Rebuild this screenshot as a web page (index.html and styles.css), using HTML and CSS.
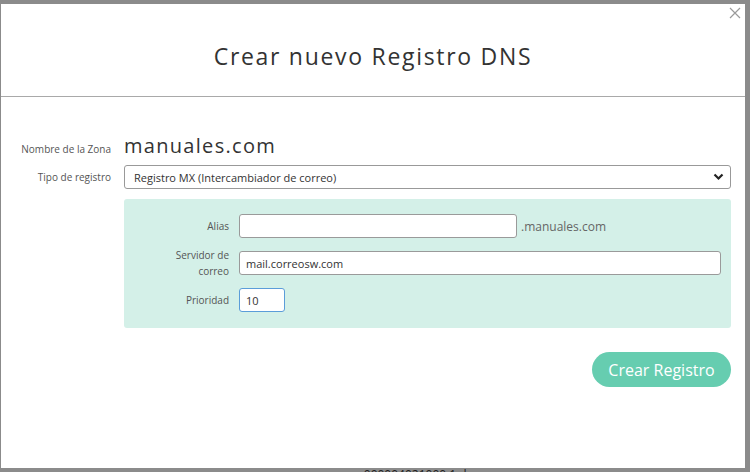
FILE: index.html
```html
<!DOCTYPE html>
<html lang="es">
<head>
    <meta charset="UTF-8">
    <meta name="viewport" content="width=device-width, initial-scale=1.0">
    <title>Crear nuevo Registro DNS</title>
    <link rel="stylesheet" href="styles.css">
</head>
<body>
    <div class="modal">
        <div class="modal-header">
            <h2>Crear nuevo Registro DNS</h2>
            <button class="close-btn" aria-label="Cerrar">
                <svg width="12" height="12" viewBox="0 0 12 12">
                    <path d="M1 1 L11 11 M11 1 L1 11" stroke="#9a9a9a" stroke-width="1.2" fill="none"/>
                </svg>
            </button>
        </div>

        <div class="modal-body">
            <div class="row row-zone">
                <label class="label">Nombre de la Zona</label>
                <div class="zone-name">manuales.com</div>
            </div>
            <div class="row row-type">
                <label class="label">Tipo de registro</label>
                <div class="select">
                    <span>Registro MX (Intercambiador de correo)</span>
                    <svg width="11" height="8" viewBox="0 0 11 8">
                        <path d="M1.5 1.5 L5.5 5.5 L9.5 1.5" stroke="#222" stroke-width="2.2" fill="none"/>
                    </svg>
                </div>
            </div>

            <div class="record-box">
                <div class="field">
                    <label class="field-label">Alias</label>
                    <input class="input input-alias" type="text" value="">
                    <span class="suffix">.manuales.com</span>
                </div>
                <div class="field">
                    <label class="field-label">Servidor de correo</label>
                    <input class="input input-wide" type="text" value="mail.correosw.com">
                </div>
                <div class="field">
                    <label class="field-label">Prioridad</label>
                    <input class="input input-small focused" type="text" value="10">
                </div>
            </div>

            <div class="actions">
                <button class="btn-create">Crear Registro</button>
            </div>
        </div>
    </div>
    <div class="page-behind">am000004021000 1.dnsw.es</div>
</body>
</html>
```

FILE: styles.css
```css
body {
    margin: 0;
    height: 472px;
    overflow: hidden;
    background-color: #8b8b8b;
    font-family: 'Open Sans', sans-serif;
    color: #333;
}

.modal {
    margin: 4px 0 0 1px;
    width: 744px;
    height: 464px;
    background-color: #ffffff;
    box-sizing: border-box;
}

.modal-header {
    position: relative;
    height: 93px;
    border-bottom: 1px solid #a9a9a9;
    display: flex;
    justify-content: center;
    align-items: center;
    padding-top: 12px;
    box-sizing: border-box;
}

.modal-header h2 {
    margin: 0;
    font-family: 'Open Sans', sans-serif;
    font-weight: 400;
    font-size: 23px;
    letter-spacing: 1.7px;
    color: #333;
}

.close-btn {
    position: absolute;
    top: 3px;
    right: 4px;
    background: none;
    border: none;
    padding: 0;
    cursor: pointer;
    line-height: 0;
}

.modal-body {
    padding: 37px 14px 0 0;
}

.row {
    display: flex;
    gap: 13px;
}

.label {
    width: 110px;
    flex-shrink: 0;
    text-align: right;
    font-size: 10px;
    color: #555;
}

.row-zone {
    align-items: baseline;
}

.zone-name {
    font-size: 20px;
    letter-spacing: 1.3px;
    color: #333;
    line-height: 24px;
}

.row-type {
    margin-top: 7px;
    align-items: center;
}

.select {
    flex: 1;
    height: 24px;
    box-sizing: border-box;
    border: 1px solid #999;
    border-radius: 3px;
    display: flex;
    align-items: center;
    justify-content: space-between;
    padding: 0 6px 0 9px;
    font-size: 11px;
    color: #333;
}

.record-box {
    margin: 10px 0 0 123px;
    background-color: #d4f0e8;
    border-radius: 3px;
    padding: 15px 10px 16px 0;
    display: flex;
    flex-direction: column;
    gap: 13px;
}

.field {
    display: flex;
    align-items: center;
    gap: 10px;
    height: 24px;
}

.field-label {
    width: 105px;
    flex-shrink: 0;
    box-sizing: border-box;
    padding-left: 40px;
    text-align: right;
    font-size: 10px;
    line-height: 16px;
    color: #555;
}

.input {
    height: 24px;
    box-sizing: border-box;
    border: 1px solid #9a9a9a;
    border-radius: 3px;
    background: #fff;
    padding: 0 6px;
    font-family: 'Open Sans', sans-serif;
    font-size: 11px;
    color: #333;
    outline: none;
}

.input-alias {
    width: 278px;
}

.suffix {
    margin-left: -6px;
    font-size: 12px;
    color: #666;
}

.input-wide {
    flex: 1;
}

.input-small {
    width: 46px;
}

.input.focused {
    border-color: #5b9dd9;
}

.actions {
    display: flex;
    justify-content: flex-end;
    margin-top: 24px;
}

.btn-create {
    width: 139px;
    height: 35px;
    border: none;
    border-radius: 18px;
    background-color: #66cdb0;
    color: #fff;
    font-family: 'Open Sans', sans-serif;
    font-size: 16px;
    letter-spacing: 0;
    cursor: pointer;
}

.page-behind {
    margin-left: 346px;
    font-size: 12px;
    line-height: 12px;
    padding-top: 1px;
    color: #1c1c1c;
}
```
